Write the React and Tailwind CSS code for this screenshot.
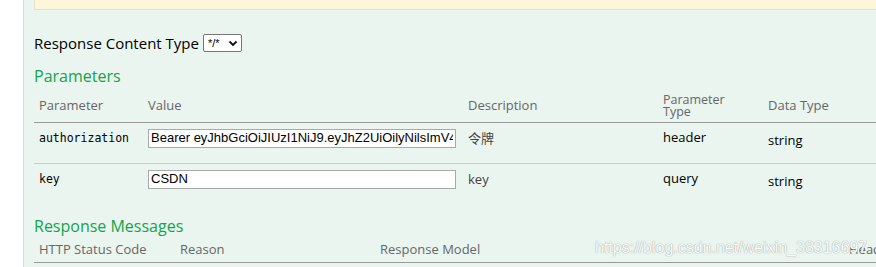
import React from 'react';

const font = { fontFamily: '"Open Sans", "Noto Sans CJK SC", sans-serif' };

const params = [
  {
    name: 'authorization',
    value: 'Bearer eyJhbGciOiJIUzI1NiJ9.eyJhZ2UiOilyNilsImV4cCI6MTYwMDAwMDAwMH0',
    desc: '令牌',
    type: 'header',
    dataType: 'string',
  },
  { name: 'key', value: 'CSDN', desc: 'key', type: 'query', dataType: 'string' },
];

function ContentTypeSelect() {
  return (
    <div className="ml-[4px] flex h-[18px] w-[39px] items-center justify-between rounded-[2px] border border-[#767676] bg-white pl-[4px] pr-[3px]">
      <span className="text-[11px] leading-none text-black" style={{ fontFamily: '"Liberation Sans", sans-serif' }}>*/*</span>
      <svg width="10" height="10" viewBox="0 0 10 10">
        <path d="M1.5 3.5 L5 7 L8.5 3.5" fill="none" stroke="#111" strokeWidth="1.8" />
      </svg>
    </div>
  );
}

export default function App() {
  return (
    <div className="relative flex h-[267px] w-[876px] overflow-hidden bg-white" style={font}>
      <div className="w-[23px] shrink-0 bg-white" />
      <div className="flex-1 border-l border-[#c3e8d1] bg-[#ebf5f0] pl-[10px]">
        <div className="h-[10px] border-b border-l border-[#e5e0c6] bg-[#fcf6db]" />

        <div className="mt-[24px] flex h-[18px] items-center">
          <span className="text-[15px] leading-none text-black">Response Content Type</span>
          <ContentTypeSelect />
        </div>

        <h4 className="mt-[14px] h-[20px] text-[16px] leading-[20px] text-[#10a54a]">Parameters</h4>

        <table className="w-[880px] table-fixed border-collapse">
          <colgroup>
            <col className="w-[109px]" />
            <col className="w-[320px]" />
            <col className="w-[195px]" />
            <col className="w-[105px]" />
            <col className="w-[151px]" />
          </colgroup>
          <thead>
            <tr className="h-[36px] border-b border-[#999] text-[13px] text-[#666]">
              <th className="px-[5px] pb-[9px] text-left align-bottom font-normal leading-[16px]">Parameter</th>
              <th className="px-[5px] pb-[9px] text-left align-bottom font-normal leading-[16px]">Value</th>
              <th className="px-[5px] pb-[9px] text-left align-bottom font-normal leading-[16px]">Description</th>
              <th className="px-[5px] pb-[4px] text-left align-bottom text-[12.5px] font-normal leading-[12px]">Parameter<br />Type</th>
              <th className="px-[5px] pb-[9px] text-left align-bottom font-normal leading-[16px]">Data Type</th>
            </tr>
          </thead>
          <tbody>
            {params.map((p, i) => (
              <tr key={p.name} className={i === 0 ? 'h-[41px] border-b border-[#ccc] align-top' : 'h-[44px] align-top'}>
                <td className="px-[5px] pt-[8px] text-[11.5px] leading-[14px] text-black" style={{ fontFamily: '"DejaVu Sans Mono", monospace' }}>
                  {p.name}
                </td>
                <td className="px-[5px] pt-[6px]">
                  <input
                    readOnly
                    value={p.value}
                    className="block h-[19px] w-[308px] border border-[#a9a9a9] bg-white px-[2px] text-[13px] text-black outline-none"
                    style={{ fontFamily: '"Liberation Sans", Arial, sans-serif' }}
                  />
                </td>
                <td className="px-[5px] pt-[6px] text-[13px] leading-[18px] text-[#444]">{p.desc}</td>
                <td className="px-[5px] pt-[5px] text-[13px] leading-[18px] text-black">{p.type}</td>
                <td className="px-[5px] pt-[8px] text-[13px] leading-[18px] text-black">{p.dataType}</td>
              </tr>
            ))}
          </tbody>
        </table>

        <h4 className="mt-[8px] h-[22px] text-[16px] leading-[22px] text-[#10a54a]">Response Messages</h4>

        <table className="w-[880px] table-fixed border-collapse">
          <colgroup>
            <col className="w-[141px]" />
            <col className="w-[200px]" />
            <col className="w-[474px]" />
            <col className="w-[65px]" />
          </colgroup>
          <thead>
            <tr className="h-[25px] border-b border-[#999] text-[13px] text-[#666]">
              <th className="px-[5px] text-left align-middle font-normal leading-[16px]">HTTP Status Code</th>
              <th className="px-[5px] text-left align-middle font-normal leading-[16px]">Reason</th>
              <th className="px-[5px] text-left align-middle font-normal leading-[16px]">Response Model</th>
              <th className="px-[0px] text-left align-middle font-normal leading-[16px]">Headers</th>
            </tr>
          </thead>
        </table>
      </div>

      <span
        className="pointer-events-none absolute left-[595px] top-[239px] text-[16px] leading-[18px] text-[#f7faf8]"
        style={{ fontFamily: '"Liberation Sans", Arial, sans-serif', textShadow: '0 0 1px #a9b0ad, 0 0 1px #a9b0ad' }}
      >
        https://blog.csdn.net/weixin_38316697
      </span>
    </div>
  );
}
